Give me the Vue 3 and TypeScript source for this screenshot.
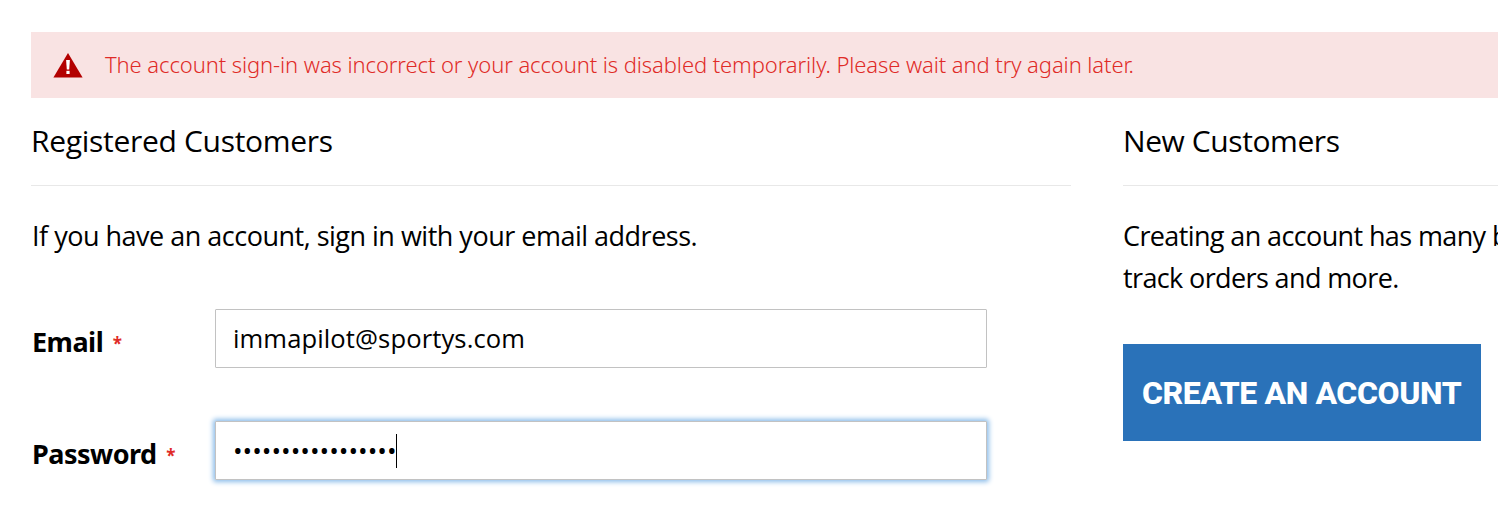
<script setup lang="ts">
import { ref } from 'vue';

const email = ref('immapilot@sportys.com');
const password = ref('•••••••••••••••••');
</script>

<template>
  <main class="page">
    <div class="alert">
      <svg class="alert__icon" width="30" height="26" viewBox="0 0 30 26" aria-hidden="true">
        <path d="M15 1 L29.6 25.4 H0.4 Z" fill="#b30000" />
        <path d="M13.1 8 H16.9 L16.2 17.4 H13.8 Z" fill="#fff" />
        <rect x="13.4" y="18.8" width="3.2" height="3.2" fill="#fff" />
      </svg>
      <span class="alert__text">The account sign-in was incorrect or your account is disabled temporarily. Please wait and try again later.</span>
    </div>

    <div class="columns">
      <section class="login">
        <h2 class="block-title">Registered Customers</h2>
        <p class="intro">If you have an account, sign in with your email address.</p>
        <div class="field field--email">
          <label class="field__label">Email <span class="req">*</span></label>
          <div class="field__control">
            <input v-model="email" class="input" type="text" />
          </div>
        </div>
        <div class="field field--password">
          <label class="field__label">Password <span class="req">*</span></label>
          <div class="field__control">
            <div class="input input--focus"><span class="dots">{{ password }}</span><span class="caret"></span></div>
          </div>
        </div>
      </section>

      <section class="new">
        <h2 class="block-title">New Customers</h2>
        <p class="intro intro--new">Creating an account has many benefits: check out faster, keep more than one address, track orders and more.</p>
        <a class="create" href="#">CREATE AN ACCOUNT</a>
      </section>
    </div>
  </main>
</template>

<style>
html,
body {
  margin: 0;
  overflow: hidden;
  background: #fff;
}
</style>

<style scoped>
.page {
  height: 512px;
  box-sizing: border-box;
  padding: 32px 0 0 31px;
  overflow: hidden;
  font-family: "Noto Sans", "Open Sans", sans-serif;
  color: #000;
}

.alert {
  display: flex;
  align-items: center;
  gap: 22px;
  width: 1500px;
  height: 66px;
  box-sizing: border-box;
  padding-left: 22px;
  background: #f9e3e3;
}

.alert__icon {
  flex: none;
}

.alert__text {
  position: relative;
  top: -1px;
  font-size: 22px;
  font-weight: 300;
  letter-spacing: -0.09px;
  color: #e02b27;
  white-space: nowrap;
}

.columns {
  display: flex;
  gap: 52px;
}

.login {
  flex: none;
  width: 1040px;
}

.new {
  flex: none;
  width: 1100px;
}

.block-title {
  margin: 0;
  height: 88px;
  box-sizing: border-box;
  padding-top: 23px;
  border-bottom: 1px solid #e8e8e8;
  font-family: "Open Sans", "Noto Sans", sans-serif;
  font-size: 30px;
  line-height: 40px;
  font-weight: 400;
  letter-spacing: -0.3px;
  white-space: nowrap;
}

.new .block-title {
  letter-spacing: -0.42px;
}

.intro {
  margin: 29px 0 0;
  font-family: "Open Sans", "Noto Sans", sans-serif;
  font-size: 27px;
  font-weight: 400;
  line-height: 42px;
  letter-spacing: -0.5px;
}

.login .intro {
  padding-left: 1px;
}

.intro--new {
  width: 1060px;
  letter-spacing: -0.62px;
}

.field {
  display: flex;
  align-items: center;
}

.field--email {
  margin-top: 52px;
}

.field--password {
  margin-top: 53px;
}

.field__label {
  flex: none;
  width: 184px;
  padding: 6px 0 0 1px;
  box-sizing: border-box;
  font-size: 27px;
  font-weight: 700;
  letter-spacing: -0.5px;
}

.req {
  position: relative;
  top: -2px;
  margin-left: 3px;
  font-size: 17px;
  color: #e02b27;
}

.field__control {
  flex: none;
  width: 772px;
}

.input {
  display: flex;
  align-items: center;
  width: 100%;
  height: 59px;
  box-sizing: border-box;
  padding: 0 17px;
  border: 1px solid #c2c2c2;
  border-radius: 1px;
  background: #fff;
  font-family: "Open Sans", "Noto Sans", sans-serif;
  font-size: 25.6px;
  font-weight: 400;
  letter-spacing: 0.1px;
  color: #000;
  outline: none;
}

.input--focus {
  box-shadow: 0 0 5px 2px #8cbdea;
}

.dots {
  font-size: 25.6px;
  line-height: 1;
  letter-spacing: 0;
}

.caret {
  width: 1px;
  height: 34px;
  margin-left: -1px;
  background: #000;
}

.create {
  display: inline-block;
  margin-top: 45px;
  padding: 0 20px 0 19px;
  height: 97px;
  line-height: 99px;
  background: #2a72b9;
  color: #fff;
  font-family: Roboto, "Noto Sans", sans-serif;
  font-size: 32px;
  font-weight: 800;
  letter-spacing: -0.4px;
  text-decoration: none;
  white-space: nowrap;
}
</style>
